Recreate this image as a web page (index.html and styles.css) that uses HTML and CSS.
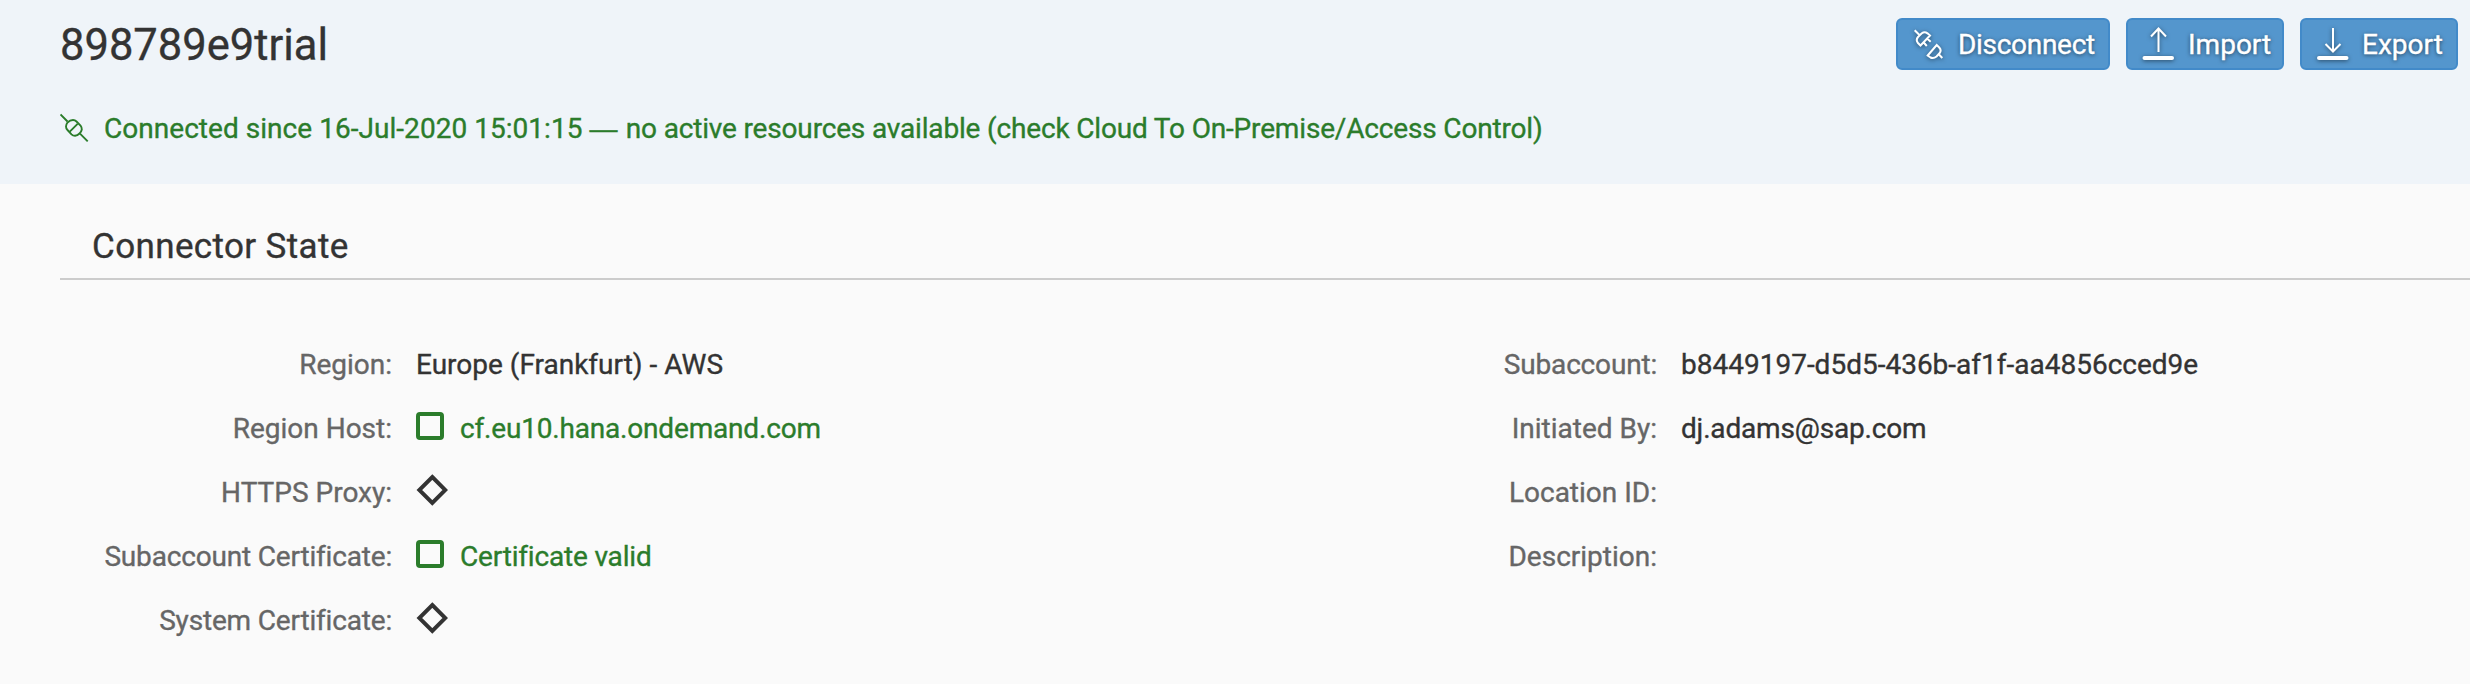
FILE: index.html
```html
<!DOCTYPE html>
<html lang="en">
<head>
<meta charset="utf-8">
<title>898789e9trial</title>
<link rel="stylesheet" href="styles.css">
</head>
<body>
<header class="header">
  <div class="title-row">
    <h1 class="title">898789e9trial</h1>
    <div class="actions">
      <button class="btn btn-disconnect">
        <svg class="btn-icon" viewBox="0 0 32 40"><g fill="none" stroke="#fff" stroke-width="2"><path d="M2.700 6.300l4.500 4.500M8.500 21.500l9.500-10-2.500-2.200q-3-2-5.700 0L6 13q-2.500 3 0 6zM11.300 18l3.500 4M15 14.500l3.700 3.300"/><path d="M15.700 31.500l9-10.500 2.300 2.300q3 3 .5 6L24.500 32.500q-3 2.500-6 1zM27 30.500l3.300 3.500"/></g></svg>
        <span>Disconnect</span>
      </button>
      <button class="btn btn-import">
        <svg class="btn-icon" viewBox="0 0 32 40"><path d="M16.500 28V5M9 12.500l7.500-8 7.500 8" fill="none" stroke="#fff" stroke-width="2"/><path d="M2.500 34h27.500" stroke="#fff" stroke-width="4" stroke-linecap="round"/></svg>
        <span>Import</span>
      </button>
      <button class="btn btn-export">
        <svg class="btn-icon" viewBox="0 0 32 40"><path d="M17 4v23M9.500 20l7.500 7.500 7.500-7.500" fill="none" stroke="#fff" stroke-width="2"/><path d="M3 34h27.500" stroke="#fff" stroke-width="4" stroke-linecap="round"/></svg>
        <span>Export</span>
      </button>
    </div>
  </div>
  <div class="status">
    <svg class="status-icon" viewBox="0 0 30 30"><g fill="none" stroke="#2b7c2b" stroke-width="1.900"><path d="M.5 1.500l7 7M20 20.700l7.700 7.700M9.800 18.600l7.800-7.800"/><path d="M7.500 9.500Q10 7 13 7q2 0 3.500 1.500l4 4q1.500 2 1.300 4-.5 2.500-2.300 4Q17.500 22.500 15 22.800q-2 0-3.500-1.500L7.500 17Q6 15.500 6 13.500 6 11.500 7.500 9.500z"/></g></svg>
    <p class="status-text"><span class="since">Connected since 16-Jul-2020 15:01:15 </span><span class="dash">—</span><span class="detail"> no active resources available (check Cloud To On-Premise/Access Control)</span></p>
  </div>
</header>
<main class="content">
  <h2 class="section-title">Connector State</h2>
  <div class="columns">
    <dl class="form form-left">
      <dt>Region:</dt><dd>Europe (Frankfurt) - AWS</dd>
      <dt>Region Host:</dt><dd class="good"><i class="square"></i><span class="tight">cf.eu10.hana.ondemand.com</span></dd>
      <dt>HTTPS Proxy:</dt><dd><svg class="diamond" viewBox="0 0 32 32"><path d="M16.300 3L29.300 16l-13 13-13-13z" fill="none" stroke="#333" stroke-width="3.900"/></svg></dd>
      <dt class="tight">Subaccount Certificate:</dt><dd class="good"><i class="square"></i><span class="tight">Certificate valid</span></dd>
      <dt class="tight">System Certificate:</dt><dd><svg class="diamond" viewBox="0 0 32 32"><path d="M16.300 3L29.300 16l-13 13-13-13z" fill="none" stroke="#333" stroke-width="3.900"/></svg></dd>
    </dl>
    <dl class="form form-right">
      <dt class="tight">Subaccount:</dt><dd>b8449197-d5d5-436b-af1f-aa4856cced9e</dd>
      <dt>Initiated By:</dt><dd class="tight">dj.adams@sap.com</dd>
      <dt>Location ID:</dt><dd></dd>
      <dt>Description:</dt><dd></dd>
    </dl>
  </div>
</main>
</body>
</html>
```
FILE: styles.css
```css
* { box-sizing: border-box; }
body { margin: 0; height: 684px; overflow: hidden; background: #fafafa; color: #333; font: 28px/32px Roboto, "Liberation Sans", sans-serif; -webkit-text-stroke: .35px currentColor; }
h1, h2, p, dl, dd { margin: 0; font-weight: 400; }
.header { height: 184px; padding: 18px 12px 0 60px; background: #eff4f9; }
.title-row { display: flex; justify-content: space-between; height: 80px; }
.title { padding-top: 2px; font-size: 43.5px; line-height: 52px; }
.actions { display: flex; gap: 16px; }
.btn { display: flex; align-items: center; height: 52px; padding: 0 0 0 14px; border: 2px solid #428ac9; border-radius: 6px; background: #5496cd; color: #fff; font: inherit; white-space: nowrap; text-shadow: 0 1px 4px rgba(0,0,0,.6); }
.btn span { padding-top: 2px; }
.btn-disconnect { width: 214px; letter-spacing: -.3px; }
.btn-import, .btn-export { width: 158px; }
.btn-icon { width: 32px; height: 40px; margin-right: 14px; overflow: visible; filter: drop-shadow(0 1px 2px rgba(0,0,0,.5)); }
.status { display: flex; align-items: center; height: 60px; color: #2b7c2b; }
.status-icon { width: 30px; height: 30px; margin-right: 14px; }
.status-text { padding-top: 2px; white-space: pre; }
.since { letter-spacing: .04px; }
.dash { margin-right: 1.5px; font-family: "Liberation Sans", sans-serif; line-height: 1; }
.detail { letter-spacing: -.165px; }
.content { padding-left: 60px; }
.section-title { height: 96px; padding: 39px 0 0 32px; border-bottom: 2px solid #ccc; font-size: 35px; line-height: 48px; letter-spacing: .37px; }
.columns { display: grid; grid-template-columns: 1266px 1fr; padding-top: 52px; }
.form { display: grid; grid-auto-rows: 64px; align-content: start; align-items: center; column-gap: 24px; }
.form-left { grid-template-columns: 332px 1fr; }
.form-right { grid-template-columns: 331px 1fr; }
.form dt { padding-top: 2px; text-align: right; color: #666; white-space: nowrap; }
.form dd { display: flex; align-items: center; height: 34px; padding-top: 2px; white-space: nowrap; }
.form .good { color: #2b7c2b; }
.form .tight { letter-spacing: -.18px; }
.square { width: 28px; height: 28px; margin: -6px 16px 0 0; border: 4px solid #2b7c2b; border-radius: 4px; }
.diamond { width: 32px; height: 32px; margin-top: -6px; }
```
